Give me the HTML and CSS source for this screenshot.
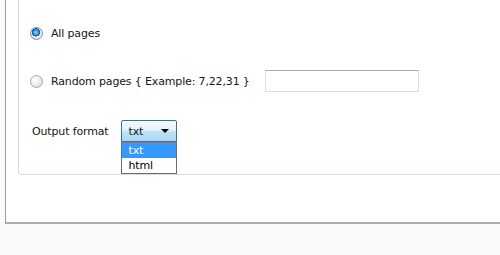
FILE: index.html
```html
<!DOCTYPE html>
<html>
<head>
<meta charset="utf-8">
<link rel="stylesheet" href="styles.css">
</head>
<body>
<div class="page">
  <div class="frame">
    <div class="group">
      <div class="row row-all">
        <span class="radio checked"></span>
        <span class="label">All pages</span>
      </div>
      <div class="row row-random">
        <span class="radio"></span>
        <span class="label">Random pages { Example: 7,22,31 }</span>
        <span class="textbox"></span>
      </div>
      <div class="row row-format">
        <span class="label format-label">Output format</span>
        <div class="combo">
          <div class="combo-box">
            <span class="combo-value">txt</span>
            <span class="combo-arrow"></span>
          </div>
          <ul class="combo-list">
            <li class="opt selected">txt</li>
            <li class="opt">html</li>
          </ul>
        </div>
      </div>
    </div>
  </div>
</div>
</body>
</html>
```
FILE: styles.css
```css
html, body {
  margin: 0;
  padding: 0;
}
body {
  width: 500px;
  height: 255px;
  overflow: hidden;
  background: #fafafc;
  font-family: "DejaVu Sans", Tahoma, sans-serif;
  font-size: 11px;
  letter-spacing: -0.15px;
  color: #151515;
}
.page {
  padding-left: 5px;
}
.frame {
  height: 222px;
  background: #ffffff;
  border-left: 1px solid #9c9c9c;
  border-bottom: 2px solid #a9a9a9;
  padding-left: 12px;
}
.group {
  height: 174px;
  border-left: 1px solid #d3dce6;
  border-bottom: 1px solid #d3dce6;
  border-bottom-left-radius: 4px;
  padding-left: 11px;
  display: flex;
  flex-direction: column;
}
.row {
  display: flex;
  align-items: center;
  height: 22px;
}
.row-all {
  margin-top: 22px;
}
.row-random {
  margin-top: 26px;
}
.row-format {
  margin-top: 28px;
}
.radio {
  width: 11px;
  height: 11px;
  border-radius: 50%;
  border: 1px solid #a3a8ad;
  background: radial-gradient(circle at 35% 35%, #ffffff 0%, #ececec 55%, #d4d4d4 100%);
  margin-right: 8px;
  flex: none;
}
.radio.checked {
  border-color: #7a8a98;
  background:
    radial-gradient(circle at 45% 40%, #9fe0ff 0%, #2a95e6 28%, #0b58a8 44%, transparent 48%),
    radial-gradient(circle at 50% 50%, #ffffff 0%, #e8e8e8 70%, #cfcfcf 100%);
}
.label {
  white-space: nowrap;
}
.textbox {
  width: 152px;
  height: 20px;
  margin-left: 15px;
  border: 1px solid #dcdfe3;
  border-top-color: #a9abae;
  background: #ffffff;
  flex: none;
}
.format-label {
  margin-left: 2px;
}
.combo {
  position: relative;
  margin-left: 13px;
  width: 56px;
  height: 22px;
}
.combo-box {
  box-sizing: border-box;
  width: 56px;
  height: 22px;
  border: 1px solid #3c6f9c;
  border-radius: 2px 2px 0 0;
  background: linear-gradient(to bottom, #f4f9fd 0%, #e3f1fb 45%, #bfe0f6 55%, #a9d5f3 100%);
  display: flex;
  align-items: center;
  padding-left: 6px;
}
.combo-value {
  flex: 1;
}
.combo-arrow {
  width: 0;
  height: 0;
  border-left: 4px solid transparent;
  border-right: 4px solid transparent;
  border-top: 4px solid #000000;
  margin-right: 7px;
}
.combo-list {
  position: absolute;
  left: 0;
  top: 22px;
  margin: 0;
  padding: 0;
  list-style: none;
  box-sizing: border-box;
  width: 56px;
  border: 1px solid #6d6d6d;
  border-top: 1px solid #b0704a;
  background: #ffffff;
}
.opt {
  height: 15px;
  line-height: 15px;
  padding-left: 6px;
  color: #000000;
}
.opt.selected {
  background: #3399ff;
  color: #ffffff;
}
```
